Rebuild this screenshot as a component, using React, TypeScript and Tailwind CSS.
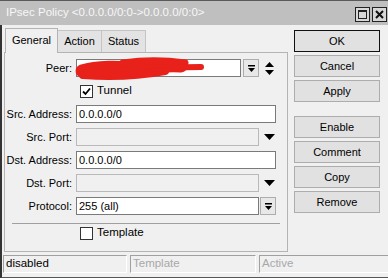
import React from "react";

const font = { fontFamily: '"Liberation Sans", Arial, sans-serif' };

function DropBarIcon() {
  return (
    <svg width="9" height="9" viewBox="0 0 9 9">
      <rect x="1" y="1" width="7" height="1.5" fill="#000" />
      <polygon points="1,4 8,4 4.5,8" fill="#000" />
    </svg>
  );
}

function UpDownIcon() {
  return (
    <svg width="11" height="15" viewBox="0 0 11 15">
      <polygon points="5.5,1 10,6 1,6" fill="#000" />
      <polygon points="1,9 10,9 5.5,14" fill="#000" />
    </svg>
  );
}

function DownTri() {
  return (
    <svg width="11" height="6" viewBox="0 0 11 6">
      <polygon points="0,0 11,0 5.5,6" fill="#000" />
    </svg>
  );
}

function Label({ children }: { children: React.ReactNode }) {
  return <div className="w-[71px] shrink-0 text-right pr-[4px] text-[11px] text-black leading-none">{children}</div>;
}

function Input({ w, value, disabled }: { w: string; value?: string; disabled?: boolean }) {
  return (
    <div
      className={`${w} h-[18px] border ${disabled ? "border-[#b9b9b9] bg-[#f0f0f0]" : "border-[#7a7a7a] bg-white"} flex items-center pl-[2px] text-[11px] text-black leading-none`}
    >
      {value}
    </div>
  );
}

function Checkbox({ checked }: { checked?: boolean }) {
  return (
    <div className="w-[13px] h-[13px] border border-[#333] bg-white flex items-center justify-center">
      {checked && (
        <svg width="9" height="9" viewBox="0 0 9 9">
          <path d="M1 4.5 L3.5 7 L8 1.5" stroke="#000" strokeWidth="1.8" fill="none" />
        </svg>
      )}
    </div>
  );
}

function Btn({ label, def }: { label: string; def?: boolean }) {
  return (
    <div
      className={`w-[86px] h-[22px] flex items-center justify-center text-[11px] text-black leading-none bg-[#e1e1e1] border ${def ? "border-[#111]" : "border-[#adadad]"}`}
    >
      {label}
    </div>
  );
}

export default function App() {
  return (
    <div className="w-[388px] h-[278px] bg-[#f0f0f0] overflow-hidden flex flex-col relative" style={font}>
      {/* title bar */}
      <div className="h-[25px] shrink-0 bg-[#bfbfbf] border-t border-[#5a5a5a] flex items-center justify-between pl-[6px] pr-[1px]">
        <div className="text-[11.5px] text-[#f7f7f7] leading-none">IPsec Policy &lt;0.0.0.0/0:0-&gt;0.0.0.0/0:0&gt;</div>
        <div className="flex gap-[2px] mt-[2px]">
          <div className="w-[15px] h-[15px] border border-[#222] bg-[#d8d8d8] flex items-center justify-center">
            <div className="w-[9px] h-[9px] border border-[#222] border-t-2"></div>
          </div>
          <div className="w-[15px] h-[15px] border border-[#222] bg-[#d8d8d8] flex items-center justify-center">
            <svg width="9" height="9" viewBox="0 0 9 9">
              <path d="M1 1 L8 8 M8 1 L1 8" stroke="#111" strokeWidth="2" />
            </svg>
          </div>
        </div>
      </div>

      {/* body */}
      <div className="flex-1 flex border-l-2 border-[#333] border-b border-b-[#555]">
        <div className="flex flex-col w-[386px]">
          <div className="flex">
            {/* left: tabs + panel */}
            <div className="flex flex-col ml-[2px] mt-[2px] w-[284px]">
              <div className="flex items-end h-[25px] pl-[1px]">
                <div className="h-[25px] w-[53px] bg-[#f0f0f0] border border-b-0 border-[#b4b4b4] flex items-center justify-center text-[11px] leading-none text-black relative z-10 -mb-px pb-[2px]">
                  General
                </div>
                <div className="h-[22px] w-[44px] bg-[#e3e3e3] border border-l-0 border-b-0 border-[#c4c4c4] flex items-center justify-center text-[11px] leading-none text-black">
                  Action
                </div>
                <div className="h-[22px] w-[44px] bg-[#e3e3e3] border border-l-0 border-b-0 border-[#c4c4c4] flex items-center justify-center text-[11px] leading-none text-black">
                  Status
                </div>
              </div>
              <div className="relative h-[200px] border border-[#b4b4b4] bg-[#f0f0f0] flex flex-col pt-[6px] gap-[5px]">
                {/* Peer */}
                <div className="flex items-center h-[18px]">
                  <Label>Peer:</Label>
                  <Input w="w-[165px]" />
                  <div className="ml-[2px] w-[16px] h-[18px] border border-[#adadad] bg-[#e8e8e8] flex items-center justify-center">
                    <DropBarIcon />
                  </div>
                  <div className="ml-[5px] flex items-center">
                    <UpDownIcon />
                  </div>
                </div>
                {/* Tunnel */}
                <div className="flex items-center h-[18px] pl-[75px] gap-[4px]">
                  <Checkbox checked />
                  <span className="text-[11.5px] leading-none text-black">Tunnel</span>
                </div>
                <div className="flex items-center h-[18px]">
                  <Label>Src. Address:</Label>
                  <Input w="w-[200px]" value="0.0.0.0/0" />
                </div>
                <div className="flex items-center h-[18px]">
                  <Label>Src. Port:</Label>
                  <Input w="w-[183px]" disabled />
                  <div className="w-[17px] flex justify-center ml-[2px]">
                    <DownTri />
                  </div>
                </div>
                <div className="flex items-center h-[18px]">
                  <Label>Dst. Address:</Label>
                  <Input w="w-[200px]" value="0.0.0.0/0" />
                </div>
                <div className="flex items-center h-[18px]">
                  <Label>Dst. Port:</Label>
                  <Input w="w-[183px]" disabled />
                  <div className="w-[17px] flex justify-center ml-[2px]">
                    <DownTri />
                  </div>
                </div>
                <div className="flex items-center h-[18px]">
                  <Label>Protocol:</Label>
                  <Input w="w-[183px]" value="255 (all)" />
                  <div className="ml-[1px] w-[16px] h-[18px] border border-[#adadad] bg-[#e8e8e8] flex items-center justify-center">
                    <DropBarIcon />
                  </div>
                </div>
                <div className="flex flex-col -mt-[5px]">
                  <div className="mt-[8px] ml-[7px] w-[268px] h-px bg-[#a0a0a0]"></div>
                  <div className="flex items-center h-[18px] pl-[75px] gap-[4px]">
                    <Checkbox />
                    <span className="text-[11.5px] leading-none text-black">Template</span>
                  </div>
                </div>
                {/* red scribble over peer */}
                <svg className="absolute left-[68px] top-[3px]" width="132" height="26" viewBox="0 0 132 26">
                  <path d="M9 15 C25 10 45 11 65 12 C85 10 98 9 108 10" stroke="#e8211b" strokeWidth="13" strokeLinecap="round" fill="none" />
                  <path d="M10 19 C35 21 65 20 92 15" stroke="#e8211b" strokeWidth="8" strokeLinecap="round" fill="none" />
                  <path d="M50 7 C70 4 92 4 112 7" stroke="#e8211b" strokeWidth="7" strokeLinecap="round" fill="none" />
                  <path d="M100 12 C112 11 122 11 128 11" stroke="#e8211b" strokeWidth="6" strokeLinecap="round" fill="none" />
                </svg>
              </div>
            </div>
            {/* right buttons */}
            <div className="flex flex-col ml-[6px] mt-[5px] gap-[3px]">
              <Btn label="OK" def />
              <Btn label="Cancel" />
              <Btn label="Apply" />
              <div className="h-[8px]"></div>
              <Btn label="Enable" />
              <Btn label="Comment" />
              <Btn label="Copy" />
              <Btn label="Remove" />
            </div>
          </div>
          {/* status bar */}
          <div className="flex mt-[3px] ml-[1px] gap-[3px] h-[18px]">
            <div className="w-[124px] border-t border-l border-[#a0a0a0] border-r border-b border-r-white border-b-white flex items-center pl-[2px] text-[11.5px] leading-none text-black">
              disabled
            </div>
            <div className="w-[126px] border-t border-l border-[#a0a0a0] border-r border-b border-r-white border-b-white flex items-center pl-[2px] text-[11.5px] leading-none text-[#a8a8a8]">
              Template
            </div>
            <div className="flex-1 border-t border-l border-[#a0a0a0] border-b border-b-white flex items-center pl-[2px] text-[11.5px] leading-none text-[#a8a8a8]">
              Active
            </div>
          </div>
        </div>
      </div>
    </div>
  );
}
